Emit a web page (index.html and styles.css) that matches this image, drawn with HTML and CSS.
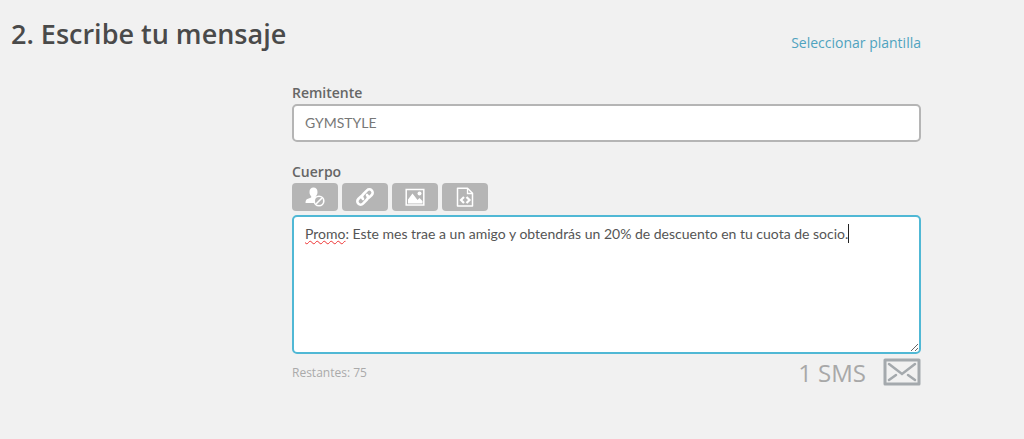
FILE: index.html
```html
<!DOCTYPE html>
<html lang="es">
  <head>
    <meta charset="utf-8">
    <title>Escribe tu mensaje</title>
    <link rel="stylesheet" href="styles.css">
  </head>
  <body>
    <form class="step">
      <div class="head">
        <h2 class="title">2. Escribe tu mensaje</h2>
        <a class="template" href="#">Seleccionar plantilla</a>
      </div>
      <div class="fields">
        <label class="label" for="sender">Remitente</label>
        <input class="control sender" id="sender" type="text" value="GYMSTYLE">

        <label class="label" for="body">Cuerpo</label>
        <div class="tools">
          <button class="tool" type="button" aria-label="Baja">
            <svg width="20" height="20" viewBox="0 0 20 20">
              <path fill="#fff" d="M8.500 .5c2.500 0 4 1.700 4 4.400 0 2-.7 3.500-1.700 4.400v1.500l1.700 1a5 5 0 0 0-3 4.200H.5c0-2.500.5-3.600 2.500-4.300l3.200-1.200V9.300C5.200 8.400 4.500 6.900 4.500 4.900 4.500 2.200 6 .5 8.500.5z"/>
              <circle cx="14" cy="14" r="4.800" fill="#b5b5b5" stroke="#fff" stroke-width="1.600"/>
              <path stroke="#fff" stroke-width="1.600" d="M11 17l6-6"/>
            </svg>
          </button>
          <button class="tool" type="button" aria-label="Enlace">
            <svg width="20" height="20" viewBox="0 0 20 20" fill="none" stroke="#fff" stroke-width="2.600" stroke-linecap="round">
              <path d="M8 12c-1.300-1.300-1.300-3.200 0-4.500l4-4.200c1.300-1.300 3.400-1.300 4.700 0s1.300 3.400 0 4.700L14 10.700"/>
              <path d="M12 8c1.300 1.300 1.300 3.200 0 4.500l-4 4.200c-1.300 1.300-3.400 1.300-4.700 0s-1.300-3.400 0-4.700L6 9.300"/>
            </svg>
          </button>
          <button class="tool" type="button" aria-label="Imagen">
            <svg width="20" height="20" viewBox="0 0 20 20">
              <path fill="none" stroke="#fff" stroke-width="1.500" d="M1.200 2.500h17.600v15.500H1.200z"/>
              <path fill="#fff" d="M3 16.500v-4l4.500-6 5 6.500 2-2 3 3v2.500z"/>
              <circle cx="14.500" cy="6.500" r="2" fill="#fff"/>
            </svg>
          </button>
          <button class="tool" type="button" aria-label="Código">
            <svg width="20" height="20" viewBox="0 0 20 20" fill="none" stroke="#fff">
              <path stroke-width="1.500" stroke-linejoin="round" d="M2.500 1.200h10l5 5v12.800h-15z"/>
              <path stroke-width="1.300" d="M12.500 1.500v5h5"/>
              <path stroke-width="2.200" d="M9 10l-3 3 3 3M11.500 10l3 3-3 3"/>
            </svg>
          </button>
        </div>
        <div class="editor">
          <textarea class="control message" id="body" spellcheck="false">Promo: Este mes trae a un amigo y obtendrás un 20% de descuento en tu cuota de socio.</textarea>
          <!-- spelling mark and caret, laid over the text -->
          <div class="marks" aria-hidden="true"><span class="typo">Promo</span>: Este mes trae a un amigo y obtendrás un 20% de descuento en tu cuota de socio.<span class="caret"></span></div>
        </div>
        <div class="foot">
          <span class="left">Restantes: 75</span>
          <span class="count">1 SMS
            <svg width="38" height="28" viewBox="0 0 38 28" fill="none" stroke="#a4a9ad">
              <path stroke-width="3" stroke-linejoin="round" d="M2 2h34v24H2z"/>
              <path stroke-width="2.500" stroke-linecap="round" d="M6 6l13 10L32 6M6 22l7-5M32 22l-7-5"/>
            </svg>
          </span>
        </div>
      </div>
    </form>
  </body>
</html>
```
FILE: styles.css
```css
* {
  box-sizing: border-box;
}
body {
  margin: 0;
  background: #f1f1f1;
  font-family: "Open Sans", "Noto Sans", sans-serif;
  color: #666;
}
.step {
  padding: 14px 103px 0 11px;
}
.head {
  display: flex;
  justify-content: space-between;
  align-items: flex-end;
  height: 40px;
}
.title {
  margin: 0;
  font-size: 27px;
  line-height: 40px;
  font-weight: 600;
  color: #4a4a4a;
}
.template {
  font-size: 14px;
  line-height: 22px;
  color: #4fa3bf;
  text-decoration: none;
}
.fields {
  display: flex;
  flex-direction: column;
  margin-left: 281px;
  padding-top: 29px;
}
.label {
  padding-bottom: 1px;
  font-size: 14px;
  line-height: 20px;
  font-weight: 600;
}
.control {
  display: block;
  width: 100%;
  border: 2px solid #b5b5b5;
  border-radius: 5px;
  background: #fff;
  font-family: Lato, sans-serif;
  font-size: 14px;
  line-height: 20px;
  color: #777;
  outline: none;
}
.sender {
  height: 38px;
  margin-bottom: 20px;
  padding: 0 11px 2px;
}
.tools {
  display: flex;
  gap: 4px;
}
.tool {
  display: flex;
  align-items: center;
  justify-content: center;
  width: 46px;
  height: 28px;
  padding: 0;
  border: 0;
  border-radius: 4px;
  background: #b5b5b5;
}
.editor {
  position: relative;
  margin-top: 4px;
}
.message {
  height: 139px;
  padding: 7px 11px;
  border-color: #50b8d5;
  color: #555;
  resize: vertical;
}
.marks {
  position: absolute;
  inset: 0;
  padding: 9px 13px;
  font-family: Lato, sans-serif;
  font-size: 14px;
  line-height: 20px;
  color: transparent;
  pointer-events: none;
}
.typo {
  text-decoration: underline wavy #e33 1px;
  text-decoration-skip-ink: none;
}
.caret {
  padding: 1px 0;
  border-right: 1px solid #222;
}
.foot {
  display: flex;
  justify-content: space-between;
  align-items: center;
  height: 36px;
}
.left {
  font-size: 12px;
  color: #aaa;
}
.count {
  display: flex;
  align-items: center;
  gap: 17px;
  font-size: 24px;
  color: #a8a8a8;
}
```
